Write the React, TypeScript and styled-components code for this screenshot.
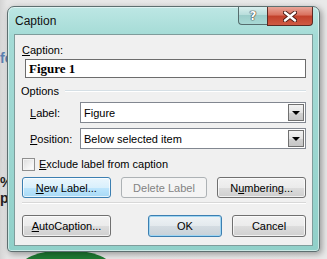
import styled, { createGlobalStyle } from "styled-components"

const Global = createGlobalStyle`
    html, body {
        margin: 0;
        padding: 0;
        background: #e2e2e2;
    }
    body {
        font-family: "Liberation Sans", Arial, sans-serif;
        font-size: 11px;
        color: #000;
    }
`

const Desktop = styled.div`
    position: relative;
    width: 327px;
    height: 259px;
    overflow: hidden;
    background: linear-gradient(to right, #d4d4d4 0px, #e6e6e6 7px, #e9e9e9 100%);
    padding: 6px 7px 0 7px;
    box-sizing: border-box;
`

const Scrap = styled.span<{ top: number; color: string }>`
    position: absolute;
    left: 0;
    top: ${p => p.top}px;
    font-size: 14px;
    font-weight: bold;
    color: ${p => p.color};
`

const GreenBlob = styled.div`
    position: absolute;
    left: 18px;
    top: 250px;
    width: 96px;
    height: 40px;
    border-radius: 50%;
    background: #1f7b33;
`

const Window = styled.div`
    position: relative;
    z-index: 1;
    width: 313px;
    height: 246px;
    box-sizing: border-box;
    border: 1px solid #5d6f70;
    border-radius: 7px 7px 4px 4px;
    background: linear-gradient(to bottom, #bde7e4 0%, #a4dbd6 12%, #9bd6d0 60%, #90d0c9 100%);
    box-shadow: 2px 2px 6px rgba(0, 0, 0, 0.35), inset 0 0 0 1px rgba(255, 255, 255, 0.5);
    display: flex;
    flex-direction: column;
`

const TitleBar = styled.div`
    height: 27px;
    display: flex;
    align-items: flex-start;
`

const Title = styled.div`
    flex: 1;
    padding: 7px 0 0 7px;
    font-size: 12px;
    line-height: 14px;
    color: #111;
`

const CaptionButtons = styled.div`
    display: flex;
    margin-right: 6px;
`

const HelpButton = styled.div`
    width: 29px;
    height: 18px;
    box-sizing: border-box;
    border: 1px solid #566d6e;
    border-top: none;
    border-right: none;
    border-radius: 0 0 0 4px;
    background: linear-gradient(to bottom, #d9efee 0%, #b9dedc 45%, #9ccdca 50%, #a9d9d5 100%);
    display: flex;
    justify-content: center;
    align-items: center;
    font-family: "DejaVu Sans", sans-serif;
    font-weight: bold;
    font-size: 12px;
    color: #fff;
    text-shadow: 0 0 1px #333, 0 0 1px #333, 0 0 1px #333;
`

const CloseButton = styled.div`
    width: 46px;
    height: 19px;
    box-sizing: border-box;
    border: 1px solid #5c2a24;
    border-top: none;
    border-radius: 0 0 4px 0;
    background: linear-gradient(to bottom, #e9a598 0%, #d9705e 45%, #c2402b 50%, #cf5a44 100%);
    display: flex;
    justify-content: center;
    align-items: center;
`

const Client = styled.div`
    margin: 0 6px 5px 6px;
    flex: 1;
    box-sizing: border-box;
    border: 1px solid #7f9c9b;
    background: #f0f0f0;
    padding: 8px 6px 0 6px;
    display: flex;
    flex-direction: column;
`

const Mnemonic = styled.span`
    text-decoration: underline;
    text-underline-offset: 1px;
`

const FieldLabel = styled.div`
    line-height: 14px;
    padding-left: 1px;
`

const TextInput = styled.div`
    margin: 2px 0 0 4px;
    height: 19px;
    box-sizing: border-box;
    border: 1px solid #6c6c6c;
    background: #fff;
    padding-left: 3px;
    font-family: "Liberation Serif", "Times New Roman", serif;
    font-weight: bold;
    font-size: 13px;
    line-height: 17px;
`

const GroupHeader = styled.div`
    margin-top: 6px;
    display: flex;
    align-items: center;
    gap: 6px;
    line-height: 14px;
    &::after {
        content: "";
        flex: 1;
        height: 0;
        border-top: 1px solid #d5dfe5;
        border-bottom: 1px solid #fff;
    }
`

const ComboRow = styled.div<{ first?: boolean }>`
    margin-top: ${p => (p.first ? 4 : 5)}px;
    display: flex;
    align-items: center;
    padding-left: 9px;
`

const ComboLabel = styled.div`
    width: 50px;
`

const Combo = styled.div`
    flex: 1;
    height: 21px;
    box-sizing: border-box;
    border: 1px solid #828790;
    background: #fff;
    display: flex;
    align-items: center;
    padding: 0 1px 0 3px;
`

const ComboText = styled.div`
    flex: 1;
`

const DropButton = styled.div`
    width: 16px;
    height: 17px;
    box-sizing: border-box;
    border: 1px solid #707070;
    background: linear-gradient(to bottom, #f2f2f2 0%, #e4e4e4 50%, #d2d2d2 51%, #c6c6c6 100%);
    display: flex;
    justify-content: center;
    align-items: center;
`

const Arrow = styled.div`
    width: 0;
    height: 0;
    border-left: 4px solid transparent;
    border-right: 4px solid transparent;
    border-top: 4px solid #000;
`

const CheckRow = styled.label`
    margin-top: 9px;
    display: flex;
    align-items: center;
    gap: 4px;
    padding-left: 1px;
    line-height: 13px;
`

const CheckBox = styled.div`
    width: 13px;
    height: 13px;
    box-sizing: border-box;
    border: 1px solid #8f8f8f;
    background: linear-gradient(135deg, #dcdcdc 0%, #f6f6f6 70%, #ffffff 100%);
    box-shadow: inset 0 0 0 1px #f4f4f4;
`

const ButtonRow = styled.div<{ top: number }>`
    margin-top: ${p => p.top}px;
    display: flex;
    gap: 10px;
    padding-left: 1px;
`

const Push = styled.div`
    flex: 1;
`

const Button = styled.div<{ width: number; height?: number; variant?: "hot" | "default" | "disabled" }>`
    width: ${p => p.width}px;
    height: ${p => p.height ?? 21}px;
    box-sizing: border-box;
    border-radius: 3px;
    display: flex;
    justify-content: center;
    align-items: center;
    border: 1px solid ${p =>
        p.variant === "hot" || p.variant === "default" ? "#3c7fb1" :
        p.variant === "disabled" ? "#adb2b5" :
        "#707070"};
    color: ${p => (p.variant === "disabled" ? "#838383" : "#000")};
    background: ${p =>
        p.variant === "hot" ? "linear-gradient(to bottom, #eaf6fd 0%, #d9f0fc 50%, #bee6fd 51%, #a7d9f5 100%)" :
        p.variant === "disabled" ? "#f4f4f4" :
        p.variant === "default" ? "linear-gradient(to bottom, #eef3f6 0%, #e3e9ed 50%, #d4dce2 51%, #c8d1d8 100%)" :
        "linear-gradient(to bottom, #f2f2f2 0%, #ebebeb 50%, #dddddd 51%, #cfcfcf 100%)"};
    box-shadow: ${p =>
        p.variant === "default" ? "inset 0 0 0 1px #9fd5f2" :
        p.variant === "disabled" ? "none" :
        "inset 0 0 0 1px rgba(255, 255, 255, 0.7)"};
`

const Separator = styled.div`
    margin: 4px 0 0 1px;
    height: 0;
    border-top: 1px solid #d8d8d8;
    border-bottom: 1px solid #fff;
`

function CloseGlyph() {
    return (
        <svg width="14" height="11" viewBox="0 0 14 11">
            <path d="M2 1.5 L12 9.5 M12 1.5 L2 9.5" stroke="#4a1a14" strokeWidth="4.2" strokeLinecap="round" />
            <path d="M2 1.5 L12 9.5 M12 1.5 L2 9.5" stroke="#fff" strokeWidth="2.4" strokeLinecap="round" />
        </svg>
    )
}

export default function App() {
    return (
        <Desktop>
            <Global />
            <Scrap top={50} color="#5a80b0">fo</Scrap>
            <Scrap top={174} color="#222">%</Scrap>
            <Scrap top={190} color="#222">p</Scrap>
            <GreenBlob />
            <Window>
                <TitleBar>
                    <Title>Caption</Title>
                    <CaptionButtons>
                        <HelpButton>?</HelpButton>
                        <CloseButton><CloseGlyph /></CloseButton>
                    </CaptionButtons>
                </TitleBar>
                <Client>
                    <FieldLabel><Mnemonic>C</Mnemonic>aption:</FieldLabel>
                    <TextInput>Figure 1</TextInput>
                    <GroupHeader>Options</GroupHeader>
                    <ComboRow first>
                        <ComboLabel><Mnemonic>L</Mnemonic>abel:</ComboLabel>
                        <Combo>
                            <ComboText>Figure</ComboText>
                            <DropButton><Arrow /></DropButton>
                        </Combo>
                    </ComboRow>
                    <ComboRow>
                        <ComboLabel><Mnemonic>P</Mnemonic>osition:</ComboLabel>
                        <Combo>
                            <ComboText>Below selected item</ComboText>
                            <DropButton><Arrow /></DropButton>
                        </Combo>
                    </ComboRow>
                    <CheckRow>
                        <CheckBox />
                        <span><Mnemonic>E</Mnemonic>xclude label from caption</span>
                    </CheckRow>
                    <ButtonRow top={6}>
                        <Button width={89} variant="hot"><span><Mnemonic>N</Mnemonic>ew Label...</span></Button>
                        <Button width={87} variant="disabled">Delete Label</Button>
                        <Button width={89}><span>N<Mnemonic>u</Mnemonic>mbering...</span></Button>
                    </ButtonRow>
                    <Separator />
                    <ButtonRow top={11}>
                        <Button width={89} height={22}><span><Mnemonic>A</Mnemonic>utoCaption...</span></Button>
                        <Push />
                        <Button width={74} height={22} variant="default">OK</Button>
                        <Button width={74} height={22}>Cancel</Button>
                    </ButtonRow>
                </Client>
            </Window>
        </Desktop>
    )
}
